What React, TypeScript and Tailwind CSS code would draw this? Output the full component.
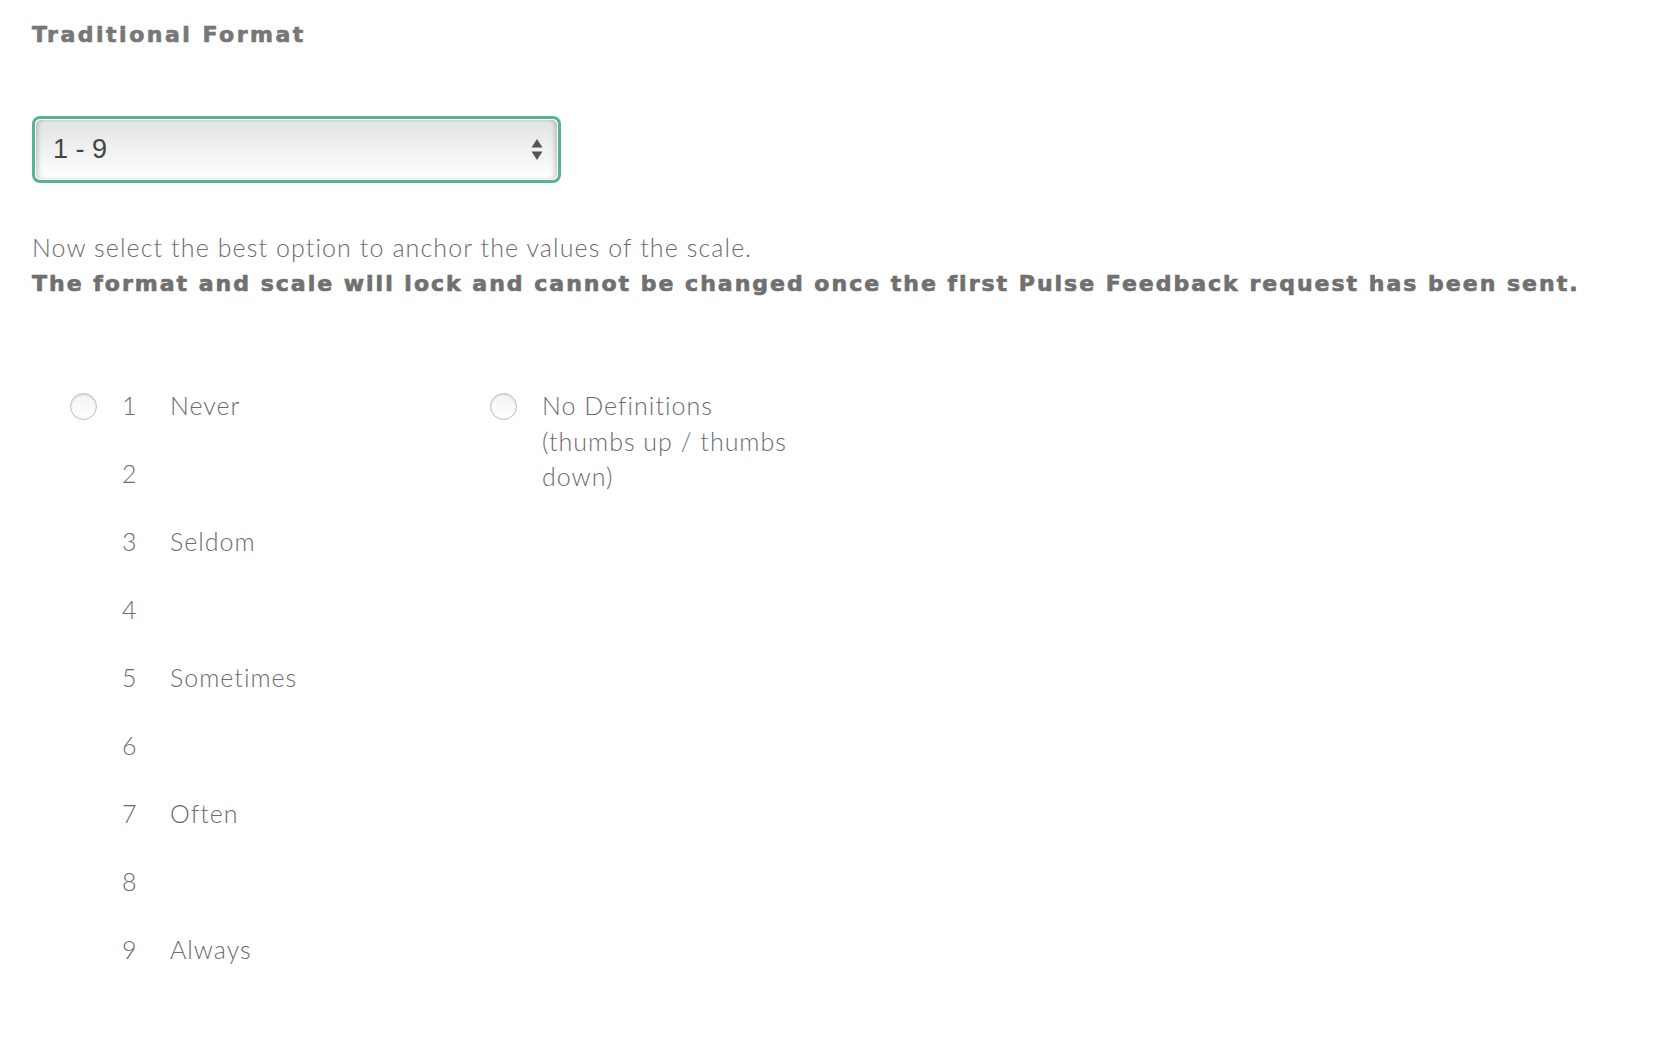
import React from 'react';

const scale = [
  { n: 1, label: 'Never' },
  { n: 2, label: '' },
  { n: 3, label: 'Seldom' },
  { n: 4, label: '' },
  { n: 5, label: 'Sometimes' },
  { n: 6, label: '' },
  { n: 7, label: 'Often' },
  { n: 8, label: '' },
  { n: 9, label: 'Always' },
];

const heavy = { fontFamily: '"DejaVu Sans", Verdana, sans-serif' };

function Radio() {
  return (
    <span className="block w-[27px] h-[27px] rounded-full border border-[#bdbdbd] bg-gradient-to-b from-[#f4f4f4] to-white shadow-[inset_0_1px_2px_rgba(0,0,0,0.12)]" />
  );
}

export default function App() {
  return (
    <div className="min-h-screen bg-white text-[#707070] pl-[32px] pt-[20px]" style={{ fontFamily: 'Lato, "Open Sans", sans-serif' }}>
      <h2 className="text-[22px] leading-[30px] font-bold tracking-[2.5px] text-[#777] [-webkit-text-stroke:0.7px_#777]" style={heavy}>Traditional Format</h2>

      <div className="mt-[66px] w-[529px] h-[67px] rounded-[8px] border-[3px] border-[#57b48c] p-[1px]">
        <div className="relative h-full rounded-[5px] bg-gradient-to-b from-[#e2e3e3] to-white shadow-[inset_4px_0_5px_-2px_rgba(0,0,0,0.2),inset_-4px_0_5px_-2px_rgba(0,0,0,0.2)] flex items-center pl-[17px]">
          <span className="text-[27px] text-[#444]" style={{ fontFamily: '"Liberation Sans", Arial, sans-serif' }}>1 - 9</span>
          <svg className="absolute right-[14px] top-1/2 -translate-y-1/2" width="12" height="24" viewBox="0 0 12 24">
            <path d="M6 1 L11.5 9.5 L0.5 9.5 Z" fill="#555" />
            <path d="M0.5 13.5 L11.5 13.5 L6 22 Z" fill="#555" />
          </svg>
        </div>
      </div>

      <div className="mt-[47px] leading-[35px]">
        <p className="font-light text-[25px] tracking-[1.1px] text-[#6c6c6c]">Now select the best option to anchor the values of the scale.</p>
        <p className="mt-[1px] font-bold text-[22px] tracking-[2px] text-[#707070] [-webkit-text-stroke:0.7px_#707070]" style={heavy}>
          The format and scale will lock and cannot be changed once the first Pulse Feedback request has been sent.
        </p>
      </div>

      <div className="mt-[71px] ml-[38px] flex text-[25px] tracking-[1px] font-light text-[#6c6c6c]">
        <div className="w-[420px] flex flex-col">
          {scale.map((s) => (
            <div key={s.n} className="h-[68px] flex items-center">
              <span className="w-[52px] flex items-center">{s.n === 1 && <Radio />}</span>
              <span className="w-[48px]">{s.n}</span>
              <span>{s.label}</span>
            </div>
          ))}
        </div>
        <div className="flex items-start">
          <span className="w-[52px] h-[68px] flex items-center"><Radio /></span>
          <p className="w-[275px] leading-[35.5px] pt-[16px]">
            <span className="block">No Definitions</span>
            (thumbs up / thumbs down)
          </p>
        </div>
      </div>
    </div>
  );
}
